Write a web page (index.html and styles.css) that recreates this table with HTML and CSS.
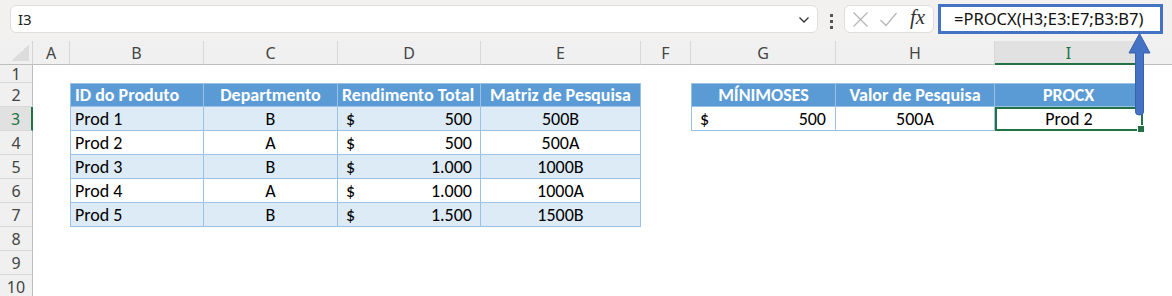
FILE: index.html
```html
<!DOCTYPE html>
<html lang="pt">
<head>
<meta charset="utf-8">
<title>PROCX</title>
<link rel="stylesheet" href="styles.css">
</head>
<body>
<div class="toolbar">
  <div class="namebox">
    <span class="nb-text">I3</span>
    <svg class="chev" width="12" height="8" viewBox="0 0 12 8"><path d="M1.5 1.5 L6 6 L10.5 1.5" fill="none" stroke="#333" stroke-width="1.3"/></svg>
  </div>
  <div class="dots"><i></i><i></i><i></i></div>
  <div class="fxbox">
    <svg width="17" height="17" viewBox="0 0 17 17"><path d="M1.5 1.5 L15.5 15.5 M15.5 1.5 L1.5 15.5" stroke="#b4b4b4" stroke-width="1.2" fill="none"/></svg>
    <svg width="19" height="17" viewBox="0 0 19 17"><path d="M1.5 9 L7 14.5 L17.5 2" stroke="#b4b4b4" stroke-width="1.2" fill="none"/></svg>
    <span class="fx">fx</span>
  </div>
  <div class="formula">=PROCX(H3;E3:E7;B3:B7)</div>
</div>

<div class="sheet">
  <!-- header row -->
  <div class="corner"><span class="tri"></span></div>
  <div class="ch">A</div><div class="ch">B</div><div class="ch">C</div><div class="ch">D</div><div class="ch">E</div><div class="ch">F</div><div class="ch">G</div><div class="ch">H</div><div class="ch ch-sel">I</div><div class="ch ch-last"></div>

  <!-- row 1 -->
  <div class="rh">1</div><div></div><div></div><div></div><div></div><div></div><div></div><div></div><div></div><div></div><div></div>

  <!-- row 2 -->
  <div class="rh">2</div><div></div>
  <div class="th th-first left">ID do Produto</div>
  <div class="th">Departmento</div>
  <div class="th left">Rendimento Total</div>
  <div class="th">Matriz de Pesquisa</div>
  <div></div>
  <div class="th th-first">MÍNIMOSES</div>
  <div class="th">Valor de Pesquisa</div>
  <div class="th">PROCX</div>
  <div></div>

  <!-- row 3 -->
  <div class="rh rh-sel">3</div><div></div>
  <div class="td band td-first left">Prod 1</div>
  <div class="td band">B</div>
  <div class="td band acc"><span>$</span><span>500</span></div>
  <div class="td band">500B</div>
  <div></div>
  <div class="td td-first acc acc-g"><span>$</span><span>500</span></div>
  <div class="td">500A</div>
  <div class="td selected">Prod 2</div>
  <div></div>

  <!-- row 4 -->
  <div class="rh">4</div><div></div>
  <div class="td td-first left">Prod 2</div>
  <div class="td">A</div>
  <div class="td acc"><span>$</span><span>500</span></div>
  <div class="td">500A</div>
  <div></div><div></div><div></div><div></div><div></div>

  <!-- row 5 -->
  <div class="rh">5</div><div></div>
  <div class="td band td-first left">Prod 3</div>
  <div class="td band">B</div>
  <div class="td band acc"><span>$</span><span>1.000</span></div>
  <div class="td band">1000B</div>
  <div></div><div></div><div></div><div></div><div></div>

  <!-- row 6 -->
  <div class="rh">6</div><div></div>
  <div class="td td-first left">Prod 4</div>
  <div class="td">A</div>
  <div class="td acc"><span>$</span><span>1.000</span></div>
  <div class="td">1000A</div>
  <div></div><div></div><div></div><div></div><div></div>

  <!-- row 7 -->
  <div class="rh">7</div><div></div>
  <div class="td band td-first left">Prod 5</div>
  <div class="td band">B</div>
  <div class="td band acc"><span>$</span><span>1.500</span></div>
  <div class="td band">1500B</div>
  <div></div><div></div><div></div><div></div><div></div>

  <!-- rows 8-10 -->
  <div class="rh">8</div><div></div><div></div><div></div><div></div><div></div><div></div><div></div><div></div><div></div><div></div>
  <div class="rh">9</div><div></div><div></div><div></div><div></div><div></div><div></div><div></div><div></div><div></div><div></div>
  <div class="rh">10</div><div></div><div></div><div></div><div></div><div></div><div></div><div></div><div></div><div></div><div></div>
</div>

<svg class="arrow" width="30" height="86" viewBox="0 0 30 86">
  <path d="M10.5 20 L10.5 79 Q10.5 82 14.5 82 Q18.5 82 18.5 79 L18.5 20 L25 20 L14.5 0.5 L4 20 Z" fill="#4472c4" stroke="#3a62a8" stroke-width="1"/>
</svg>
</body>
</html>
```

FILE: styles.css
```css
* { box-sizing: border-box; }

html, body {
  margin: 0;
  padding: 0;
  width: 1172px;
  height: 296px;
  overflow: hidden;
  background: #ffffff;
}

body {
  position: relative;
  font-family: "Carlito", "Lato", sans-serif;
}

/* ---------- formula bar ---------- */
.toolbar {
  height: 41px;
  background: #f3f0f0;
  display: flex;
  align-items: flex-start;
  padding-left: 10px;
}

.namebox {
  margin-top: 5px;
  width: 808px;
  height: 28px;
  background: #fff;
  border: 1px solid #e2dddd;
  border-radius: 6px;
  display: flex;
  align-items: center;
  justify-content: space-between;
  padding: 0 7px 0 7px;
}

.nb-text {
  font-family: "Noto Sans", sans-serif;
  font-size: 15px;
  color: #222;
}

.chev { margin-top: 1px; }

.dots {
  width: 26px;
  height: 41px;
  display: flex;
  flex-direction: column;
  align-items: center;
  justify-content: center;
  gap: 3px;
  padding-top: 1px;
}

.dots i {
  display: block;
  width: 3px;
  height: 3px;
  background: #555;
}

.fxbox {
  margin-top: 5px;
  width: 90px;
  height: 28px;
  background: #fff;
  border: 1px solid #e2dddd;
  border-radius: 6px;
  display: flex;
  align-items: center;
  padding-left: 7px;
  gap: 10px;
}

.fx {
  font-family: "Liberation Serif", serif;
  font-style: italic;
  font-size: 21px;
  color: #333;
  margin-left: 2px;
  margin-top: -3px;
}

.formula {
  margin-top: 4px;
  margin-left: 4px;
  width: 225px;
  height: 30px;
  background: #fff;
  border: 3px solid #4472c4;
  font-family: "Noto Sans", sans-serif;
  font-size: 16.5px;
  color: #111;
  padding-left: 13px;
  line-height: 23px;
  white-space: nowrap;
}

/* ---------- sheet grid ---------- */
.sheet {
  display: grid;
  grid-template-columns: 33px 37px 134px 134px 143px 160px 50px 145px 159px 148px 1fr;
  grid-template-rows: 24px 18px repeat(9, 24px);
  font-size: 18px;
  color: #000;
}

.sheet > div {
  display: flex;
  align-items: center;
  justify-content: center;
  white-space: nowrap;
  min-width: 0;
}

.corner {
  background: #f0f0f0;
  border-right: 1px solid #d4d4d4;
  border-bottom: 1px solid #bdbdbd;
  justify-content: flex-end !important;
  align-items: flex-end !important;
  padding: 0 3px 3px 0;
}

.tri {
  display: block;
  width: 17px;
  height: 17px;
  background: linear-gradient(to bottom right, transparent 50%, #dcdcdc 50%);
}

.ch {
  background: #f0f0f0;
  border-right: 1px solid #d8d8d8;
  border-bottom: 1px solid #bdbdbd;
  font-family: "Noto Sans", sans-serif;
  font-size: 16px;
  color: #444;
  padding-top: 1px;
}

.ch-sel {
  background: #e1e1e1;
  color: #217346;
  border-bottom: 2px solid #217346;
}

.ch-last { border-right: none; }

.rh {
  background: #f0f0f0;
  border-right: 1px solid #bdbdbd;
  border-bottom: 1px solid #d8d8d8;
  font-family: "Noto Sans", sans-serif;
  font-size: 16px;
  color: #444;
}

.rh-sel {
  background: #e1e1e1;
  color: #217346;
  border-right: 2px solid #217346;
}

/* ---------- tables ---------- */
.th {
  background: #5b9bd5;
  color: #fff;
  font-weight: bold;
  border-right: 1px solid #9bc2e6;
  border-bottom: 1px solid #9bc2e6;
  border-top: 1px solid #9bc2e6;
  padding: 0 4px;
}

.th-first, .td-first { border-left: 1px solid #9bc2e6; }

.td {
  background: #fff;
  border-right: 1px solid #9bc2e6;
  border-bottom: 1px solid #9bc2e6;
  padding: 0 4px;
}

.band { background: #ddebf7; }

.sheet > .left { justify-content: flex-start; }

.sheet > .acc {
  justify-content: space-between;
  padding: 0 8px 0 8px;
}

.sheet > .acc-g { padding-right: 9px; }

.selected {
  position: relative;
  border: 2px solid #217346 !important;
}

.selected::after {
  content: "";
  position: absolute;
  right: -4px;
  bottom: -4px;
  width: 6px;
  height: 6px;
  background: #217346;
  border: 1px solid #fff;
}

/* ---------- arrow overlay ---------- */
.arrow {
  position: absolute;
  left: 1125px;
  top: 33px;
}
```
